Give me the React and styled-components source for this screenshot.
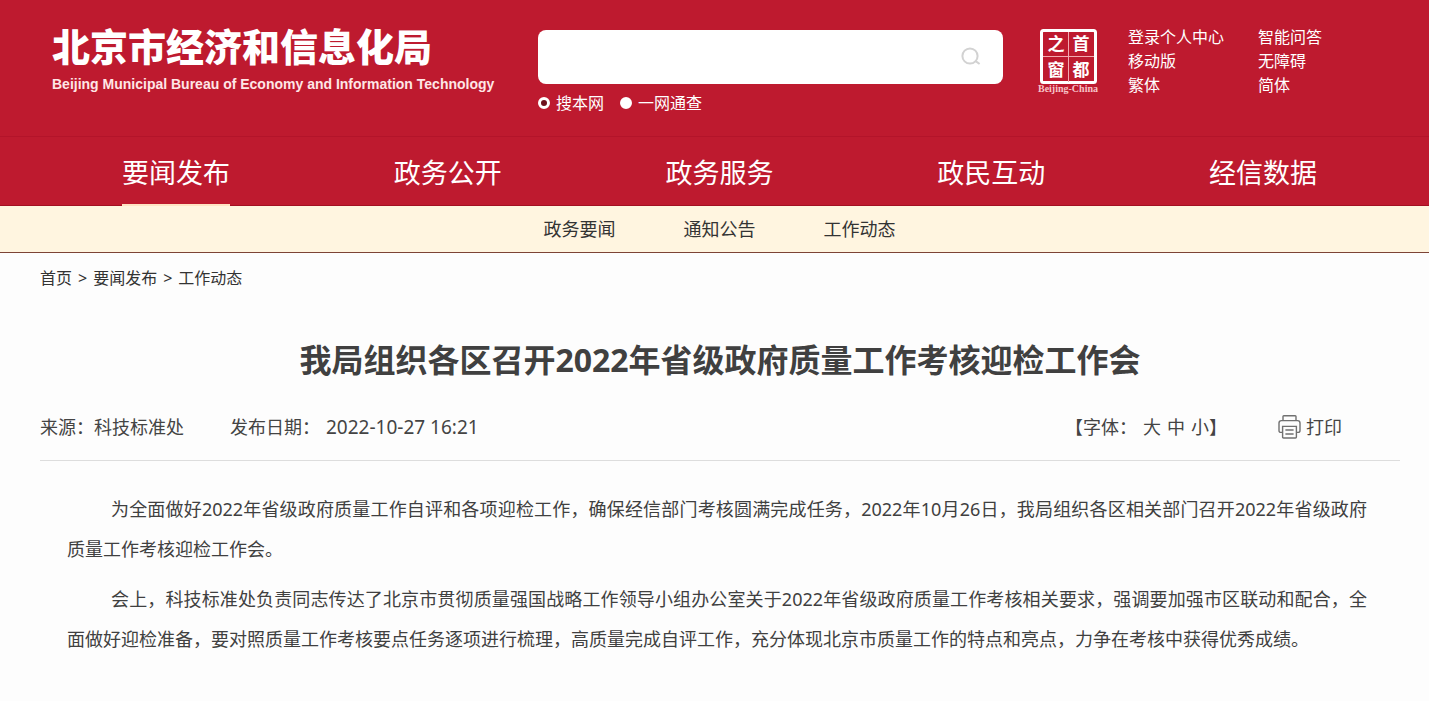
import React from "react";
import styled, { createGlobalStyle } from "styled-components";

const GlobalStyle = createGlobalStyle`
  *, *::before, *::after { box-sizing: border-box; }
  body {
    margin: 0;
    background: #fdfdfd;
    color: #333;
    font-family: "Noto Sans", "Noto Sans CJK SC", sans-serif;
  }
  h1, h2, p, ul { margin: 0; padding: 0; }
  ul { list-style: none; }
  a { color: inherit; text-decoration: none; }
`;

const TopBar = styled.header`
  display: flex;
  align-items: flex-start;
  height: 137px;
  padding: 25px 30px 0 52px;
  background: #be1a2f;
  border-bottom: 1px solid #b3142a;
  color: #fff;
`;

const Brand = styled.a`
  display: block;
  width: 486px;
  white-space: nowrap;
`;

const BrandName = styled.span`
  display: block;
  font-family: "Noto Sans CJK SC", sans-serif;
  font-size: 38px;
  font-weight: 900;
  line-height: 40px;
`;

const BrandEnglish = styled.span`
  display: block;
  margin-top: 11px;
  font-family: "Liberation Sans", sans-serif;
  font-size: 14px;
  font-weight: 700;
  line-height: 16px;
  color: #ffe6e6;
`;

const SearchForm = styled.form`
  width: 465px;
  padding-top: 5px;
`;

const SearchField = styled.div`
  display: flex;
  align-items: center;
  height: 54px;
  border-radius: 8px;
  background: #fff;
`;

const SearchInput = styled.input`
  flex: 1;
  min-width: 0;
  height: 100%;
  padding: 0 16px;
  border: 0;
  background: none;
  font: inherit;
  font-size: 16px;
  outline: none;
`;

const SearchButton = styled.button`
  display: flex;
  padding: 0;
  margin-right: 21px;
  border: 0;
  background: none;
  cursor: pointer;
`;

const Scopes = styled.div`
  display: flex;
  gap: 16px;
  margin-top: 7px;
`;

const Scope = styled.label`
  display: flex;
  align-items: center;
  gap: 6px;
  font-size: 16px;
  line-height: 24px;
`;

const Radio = styled.input`
  appearance: none;
  width: 12px;
  height: 12px;
  margin: 0;
  border: 3px solid #fff;
  border-radius: 50%;
  background: #fff;
  &:checked { background: #6e101c; }
`;

const SealLink = styled.a`
  display: block;
  margin: 3px 0 0 33px;
  svg { display: block; }
`;

const QuickLinks = styled.ul`
  display: grid;
  grid-template-columns: 130px auto;
  margin-left: 28px;
  font-size: 16px;
  line-height: 24px;
  white-space: nowrap;
`;

const MainNav = styled.nav`
  display: grid;
  grid-template-columns: repeat(5, 1fr);
  justify-items: center;
  height: 69px;
  padding: 0 30px 0 40px;
  background: #be1a2f;
  border-bottom: 1px solid #a31022;
`;

const MainLink = styled.a`
  height: 69px;
  border-bottom: 2px solid ${(p) => (p.$active ? "#ffe3c4" : "transparent")};
  color: #fff;
  font-size: 27px;
  line-height: 72px;
`;

const SubNav = styled.nav`
  display: flex;
  justify-content: center;
  gap: 68px;
  padding: 0 30px 0 40px;
  background: #fff5e0;
  border-bottom: 1px solid #7d4436;
  font-size: 18px;
  line-height: 46px;
`;

const Page = styled.main`
  padding: 0 29px 40px 40px;
`;

const Breadcrumb = styled.nav`
  display: flex;
  gap: 6px;
  padding-top: 13px;
  font-size: 16px;
  line-height: 24px;
`;

const Title = styled.h1`
  margin-top: 46px;
  font-size: 32px;
  font-weight: 700;
  line-height: 48px;
  text-align: center;
  color: #404040;
`;

const Meta = styled.div`
  display: flex;
  align-items: center;
  height: 65px;
  margin-top: 12px;
  padding: 0 58px 2px 0;
  border-bottom: 1px solid #ddd;
  font-size: 18px;
  line-height: 28px;
  color: #444;
`;

const Published = styled.span`
  margin-left: 46px;
  time {
    margin-left: 6px;
    font-size: 19px;
  }
`;

const FontSizes = styled.div`
  display: flex;
  margin-left: auto;
`;

const SizeGroup = styled.span`
  display: flex;
  gap: 6px;
  margin-left: 6px;
`;

const TextButton = styled.button`
  display: flex;
  align-items: center;
  gap: 5px;
  padding: 0;
  border: 0;
  background: none;
  color: inherit;
  font: inherit;
  cursor: pointer;
`;

const PrintButton = styled(TextButton)`
  margin-left: 51px;
`;

const Article = styled.article`
  padding: 28px 33px 0 27px;
  font-size: 18px;
  line-height: 40px;
  color: #404040;
`;

const Paragraph = styled.p`
  text-indent: 44px;
  text-align: justify;
  & + & { margin-top: 10px; }
`;

const SearchIcon = () => (
  <svg width="22" height="20" viewBox="0 0 22 20" fill="none" stroke="#d2d2d2" strokeWidth="2">
    <circle cx="10" cy="9" r="7.6" />
    <path d="M15 13.6 L19.6 17" />
  </svg>
);

const PrinterIcon = () => (
  <svg width="23" height="24" viewBox="0 0 23 24" fill="none" stroke="#707070" strokeWidth="1.4">
    <path d="M5 5.4V1.6Q5 .8 5.8.8H17.2Q18 .8 18 1.6V5.4" />
    <path d="M4.4 17.4H3Q1 17.4 1 15.4V8Q1 5.6 3.4 5.6H19.6Q22 5.6 22 8V15.4Q22 17.4 20 17.4H18.6" />
    <path d="M4.6 11.4H18.4V22Q18.4 23 17.4 23H5.6Q4.6 23 4.6 22Z" />
    <path d="M7.4 15H15.6M7.4 19H15.6" />
  </svg>
);

const Seal = () => (
  <svg width="64" height="66" viewBox="0 0 64 66" fill="#fff" role="img" aria-label="首都之窗">
    <rect x="5.5" y="2.5" width="54" height="52" rx="2" fill="none" stroke="#fff" strokeWidth="3" />
    <path d="M32.5 4V54M7 28.5H58" stroke="#f2a9b0" strokeWidth="1" />
    <g fontFamily="Noto Sans CJK SC, sans-serif" fontWeight="700" fontSize="17" textAnchor="middle">
      <text x="20" y="22">之</text>
      <text x="45" y="22">首</text>
      <text x="20" y="48">窗</text>
      <text x="45" y="48">都</text>
    </g>
    <text x="32" y="64" fill="#f7c4c9" fontFamily="Liberation Serif, serif" fontWeight="700" fontSize="10" textAnchor="middle">Beijing-China</text>
  </svg>
);

const quickLinks = ["登录个人中心", "智能问答", "移动版", "无障碍", "繁体", "简体"];
const mainLinks = ["要闻发布", "政务公开", "政务服务", "政民互动", "经信数据"];
const subLinks = ["政务要闻", "通知公告", "工作动态"];

export default function App() {
  return (
    <>
      <GlobalStyle />
      <TopBar>
        <Brand href="#">
          <BrandName>北京市经济和信息化局</BrandName>
          <BrandEnglish>Beijing Municipal Bureau of Economy and Information Technology</BrandEnglish>
        </Brand>
        <SearchForm onSubmit={(e) => e.preventDefault()}>
          <SearchField>
            <SearchInput type="text" aria-label="搜索" />
            <SearchButton type="submit" aria-label="搜索"><SearchIcon /></SearchButton>
          </SearchField>
          <Scopes>
            <Scope><Radio type="radio" name="scope" defaultChecked />搜本网</Scope>
            <Scope><Radio type="radio" name="scope" />一网通查</Scope>
          </Scopes>
        </SearchForm>
        <SealLink href="#"><Seal /></SealLink>
        <QuickLinks>
          {quickLinks.map((t) => <li key={t}><a href="#">{t}</a></li>)}
        </QuickLinks>
      </TopBar>
      <MainNav>
        {mainLinks.map((t, i) => <MainLink key={t} href="#" $active={i === 0}>{t}</MainLink>)}
      </MainNav>
      <SubNav>
        {subLinks.map((t) => <a key={t} href="#">{t}</a>)}
      </SubNav>
      <Page>
        <Breadcrumb>
          <a href="#">首页</a><span>&gt;</span>
          <a href="#">要闻发布</a><span>&gt;</span>
          <a href="#">工作动态</a>
        </Breadcrumb>
        <Title>我局组织各区召开2022年省级政府质量工作考核迎检工作会</Title>
        <Meta>
          <span>来源：科技标准处</span>
          <Published>发布日期：<time>2022-10-27 16:21</time></Published>
          <FontSizes>
            <span>【字体：</span>
            <SizeGroup>
              <TextButton type="button">大</TextButton>
              <TextButton type="button">中</TextButton>
              <TextButton type="button">小</TextButton>
            </SizeGroup>
            <span>】</span>
          </FontSizes>
          <PrintButton type="button"><PrinterIcon />打印</PrintButton>
        </Meta>
        <Article>
          <Paragraph>
            为全面做好2022年省级政府质量工作自评和各项迎检工作，确保经信部门考核圆满完成任务，2022年10月26日，我局组织各区相关部门召开2022年省级政府质量工作考核迎检工作会。
          </Paragraph>
          <Paragraph>
            会上，科技标准处负责同志传达了北京市贯彻质量强国战略工作领导小组办公室关于2022年省级政府质量工作考核相关要求，强调要加强市区联动和配合，全面做好迎检准备，要对照质量工作考核要点任务逐项进行梳理，高质量完成自评工作，充分体现北京市质量工作的特点和亮点，力争在考核中获得优秀成绩。
          </Paragraph>
        </Article>
      </Page>
    </>
  );
}
